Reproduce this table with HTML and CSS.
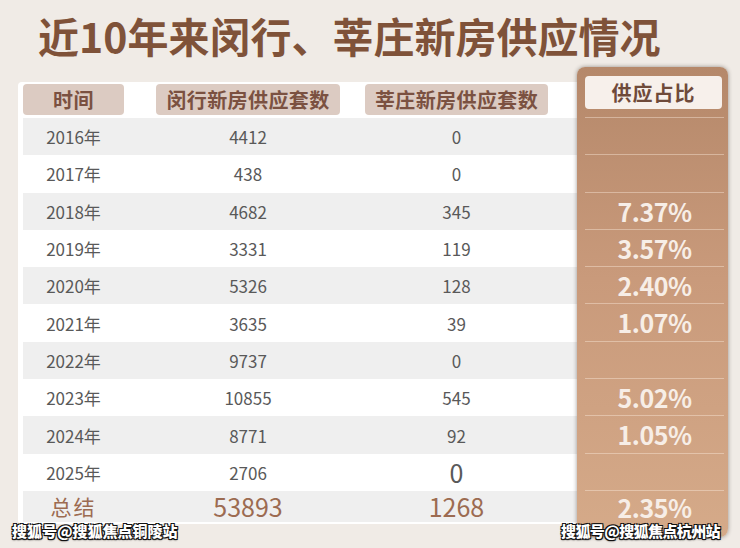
FILE: index.html
```html
<!DOCTYPE html>
<html lang="zh-CN">
<head>
<meta charset="utf-8">
<title>近10年来闵行、莘庄新房供应情况</title>
<link rel="stylesheet" href="styles.css">
</head>
<body>
<div class="page">
  <h1 class="title">近10年来闵行、莘庄新房供应情况</h1>
  <div class="board">
    <div class="table-card">
      <div class="row head">
        <span class="cell c1 pill">时间</span>
        <span class="cell c2 pill">闵行新房供应套数</span>
        <span class="cell c3 pill">莘庄新房供应套数</span>
      </div>
      <div class="row odd"><span class="cell c1">2016年</span><span class="cell c2">4412</span><span class="cell c3">0</span></div>
      <div class="row"><span class="cell c1">2017年</span><span class="cell c2">438</span><span class="cell c3">0</span></div>
      <div class="row odd"><span class="cell c1">2018年</span><span class="cell c2">4682</span><span class="cell c3">345</span></div>
      <div class="row"><span class="cell c1">2019年</span><span class="cell c2">3331</span><span class="cell c3">119</span></div>
      <div class="row odd"><span class="cell c1">2020年</span><span class="cell c2">5326</span><span class="cell c3">128</span></div>
      <div class="row"><span class="cell c1">2021年</span><span class="cell c2">3635</span><span class="cell c3">39</span></div>
      <div class="row odd"><span class="cell c1">2022年</span><span class="cell c2">9737</span><span class="cell c3">0</span></div>
      <div class="row"><span class="cell c1">2023年</span><span class="cell c2">10855</span><span class="cell c3">545</span></div>
      <div class="row odd"><span class="cell c1">2024年</span><span class="cell c2">8771</span><span class="cell c3">92</span></div>
      <div class="row"><span class="cell c1">2025年</span><span class="cell c2">2706</span><span class="cell c3 big">0</span></div>
      <div class="row odd total"><span class="cell c1">总结</span><span class="cell c2">53893</span><span class="cell c3">1268</span></div>
    </div>
    <div class="ratio-col">
      <div class="ratio-head"><span class="ratio-pill">供应占比</span></div>
      <div class="ratio-cell"></div>
      <div class="ratio-cell"></div>
      <div class="ratio-cell">7.37%</div>
      <div class="ratio-cell">3.57%</div>
      <div class="ratio-cell">2.40%</div>
      <div class="ratio-cell">1.07%</div>
      <div class="ratio-cell"></div>
      <div class="ratio-cell">5.02%</div>
      <div class="ratio-cell">1.05%</div>
      <div class="ratio-cell"></div>
      <div class="ratio-cell last">2.35%</div>
    </div>
  </div>
  <div class="watermark wm-left">搜狐号@搜狐焦点铜陵站</div>
  <div class="watermark wm-right">搜狐号@搜狐焦点杭州站</div>
</div>
</body>
</html>
```

FILE: styles.css
```css
html, body {
  margin: 0;
  padding: 0;
}
body {
  background: #f0ebe6;
  font-family: "Noto Sans CJK SC", "Noto Sans", sans-serif;
}
.page {
  position: relative;
  width: 740px;
  height: 548px;
  overflow: hidden;
  background: #f0ebe6;
}
.title {
  margin: 0;
  padding: 4px 0 0 38px;
  height: 63px;
  line-height: 63px;
  font-size: 41px;
  font-weight: 700;
  letter-spacing: 0;
  color: #7f5239;
  white-space: nowrap;
}
.board {
  display: flex;
  align-items: flex-start;
  padding-left: 18px;
}
.table-card {
  margin-top: 15px;
  width: 559px;
  background: #ffffff;
  border-radius: 4px 0 0 4px;
  padding: 2px 0 2px 5px;
  box-sizing: border-box;
}
.row {
  display: flex;
  align-items: center;
  height: 37.3px;
  font-size: 17px;
  color: #595959;
}
.row.odd {
  background: #efefef;
}
.row.head {
  height: 34px;
  align-items: flex-start;
  background: transparent;
}
.cell {
  display: block;
  text-align: center;
  white-space: nowrap;
}
.c1 { width: 101px; }
.c2 { width: 184px; margin-left: 32px; }
.c3 { width: 183px; margin-left: 25px; }
.pill {
  height: 31px;
  line-height: 31px;
  background: #dccbc2;
  border-radius: 4px;
  color: #7b5141;
  font-size: 20px;
  font-weight: 700;
  letter-spacing: 0.4px;
}
.big {
  font-size: 25px;
}
.row.total {
  height: 31px;
  color: #9c6b51;
  font-size: 25px;
}
.row.total .c1 {
  font-size: 21px;
  letter-spacing: 2px;
}
.ratio-col {
  width: 151px;
  height: 470px;
  border-radius: 8px;
  background: linear-gradient(180deg, #b5886a 0%, #c99a7b 45%, #d5aa89 100%);
  box-shadow: 0 0 4px rgba(40, 30, 25, 0.45);
  padding: 0 4px 0 8px;
  box-sizing: border-box;
}
.ratio-head {
  height: 50px;
  padding-top: 9px;
  box-sizing: border-box;
}
.ratio-pill {
  display: block;
  height: 33px;
  line-height: 33px;
  margin-right: 2px;
  background: #f7f0eb;
  border-radius: 4px;
  text-align: center;
  color: #6f4a3a;
  font-size: 20px;
  font-weight: 700;
  letter-spacing: 1px;
}
.ratio-cell {
  height: 37.3px;
  line-height: 37px;
  border-top: 1px solid rgba(255, 240, 228, 0.4);
  box-sizing: border-box;
  text-align: center;
  color: #f7eee7;
  font-size: 25px;
  font-weight: 700;
  letter-spacing: -0.5px;
}
.ratio-cell.last {
  height: 46px;
  line-height: 27px;
  padding-top: 3px;
}
.watermark {
  position: absolute;
  top: 522px;
  line-height: 18px;
  font-size: 15px;
  font-weight: 900;
  color: #ffffff;
  white-space: nowrap;
  text-shadow: 1px 1px 0 #111, -1px -1px 0 #111, 1px -1px 0 #111, -1px 1px 0 #111, 0 1px 2px #000;
}
.wm-left { left: 12px; }
.wm-right { left: 561px; letter-spacing: -0.6px; }
```
